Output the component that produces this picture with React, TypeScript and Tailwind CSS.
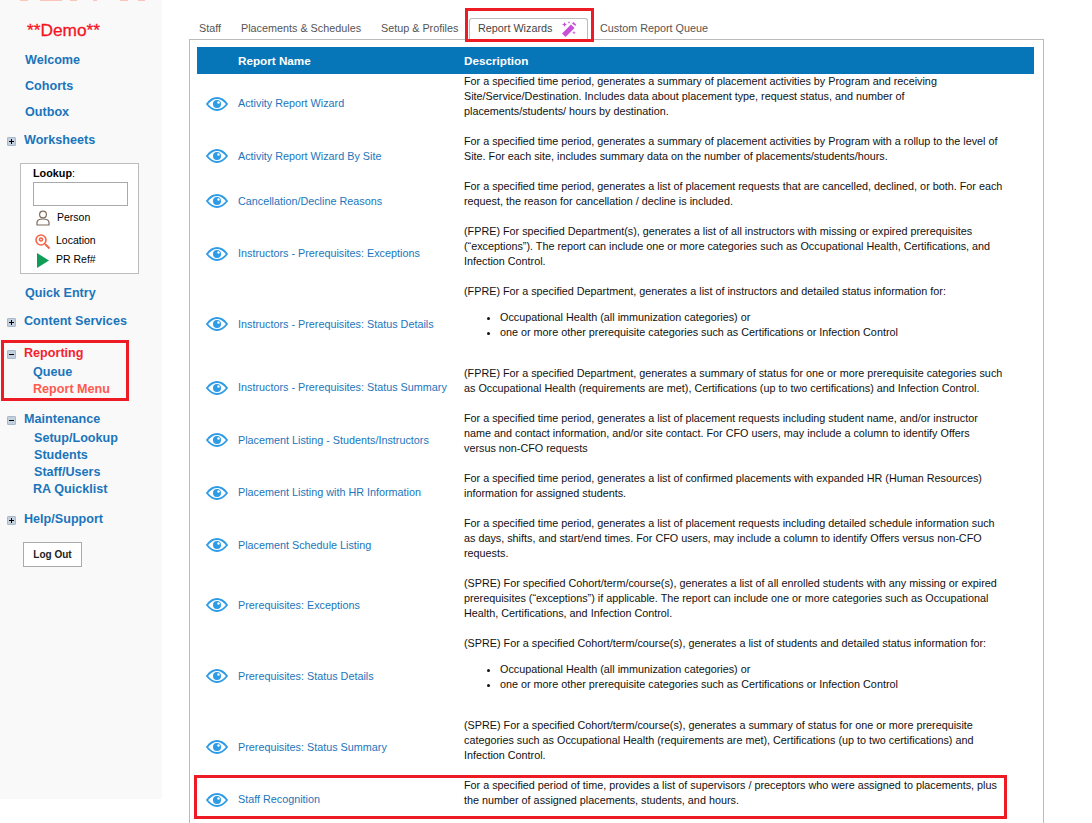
const rows = [
  { name: 'Activity Report Wizard', text: 'For a specified time period, generates a summary of placement activities by Program and receiving Site/Service/Destination. Includes data about placement type, request status, and number of placements/students/ hours by destination.' },
  { name: 'Activity Report Wizard By Site', text: 'For a specified time period, generates a summary of placement activities by Program with a rollup to the level of Site. For each site, includes summary data on the number of placements/students/hours.' },
  { name: 'Cancellation/Decline Reasons', text: 'For a specified time period, generates a list of placement requests that are cancelled, declined, or both. For each request, the reason for cancellation / decline is included.' },
  { name: 'Instructors - Prerequisites: Exceptions', text: '(FPRE) For specified Department(s), generates a list of all instructors with missing or expired prerequisites (“exceptions”). The report can include one or more categories such as Occupational Health, Certifications, and Infection Control.' },
  { name: 'Instructors - Prerequisites: Status Details', text: '(FPRE) For a specified Department, generates a list of instructors and detailed status information for:', listMargin: 'mb-[10.5px]', list: ['Occupational Health (all immunization categories) or', 'one or more other prerequisite categories such as Certifications or Infection Control'] },
  { name: 'Instructors - Prerequisites: Status Summary', text: '(FPRE) For a specified Department, generates a summary of status for one or more prerequisite categories such as Occupational Health (requirements are met), Certifications (up to two certifications) and Infection Control.' },
  { name: 'Placement Listing - Students/Instructors', text: 'For a specified time period, generates a list of placement requests including student name, and/or instructor name and contact information, and/or site contact. For CFO users, may include a column to identify Offers versus non-CFO requests' },
  { name: 'Placement Listing with HR Information', text: 'For a specified time period, generates a list of confirmed placements with expanded HR (Human Resources) information for assigned students.' },
  { name: 'Placement Schedule Listing', text: 'For a specified time period, generates a list of placement requests including detailed schedule information such as days, shifts, and start/end times. For CFO users, may include a column to identify Offers versus non-CFO requests.' },
  { name: 'Prerequisites: Exceptions', text: '(SPRE) For specified Cohort/term/course(s), generates a list of all enrolled students with any missing or expired prerequisites (“exceptions”) if applicable. The report can include one or more categories such as Occupational Health, Certifications, and Infection Control.' },
  { name: 'Prerequisites: Status Details', text: '(SPRE) For a specified Cohort/term/course(s), generates a list of students and detailed status information for:', listMargin: 'mb-[11px]', list: ['Occupational Health (all immunization categories) or', 'one or more other prerequisite categories such as Certifications or Infection Control'] },
  { name: 'Prerequisites: Status Summary', text: '(SPRE) For a specified Cohort/term/course(s), generates a summary of status for one or more prerequisite categories such as Occupational Health (requirements are met), Certifications (up to two certifications) and Infection Control.' },
  { name: 'Staff Recognition', text: 'For a specified period of time, provides a list of supervisors / preceptors who were assigned to placements, plus the number of assigned placements, students, and hours.' },
]

function Eye() {
  return (
    <svg width="22" height="14" viewBox="0 0 22 14" fill="none">
      <path d="M1 7C4 3 7 1 11 1s7 2 10 6c-3 4-6 6-10 6S4 11 1 7z" stroke="#2e9be6" strokeWidth="1.8" />
      <circle cx="11" cy="7" r="4" fill="#2e9be6" />
      <circle cx="12.5" cy="5.500" r="1.200" fill="#fff" />
    </svg>
  )
}

function Box({ minus }: { minus?: boolean }) {
  return (
    <span className="relative flex h-[9px] w-[9px] items-center justify-center rounded-[1px] border border-[#a9b9ca] bg-[#c3d0de]">
      <span className="h-px w-[5px] bg-black" />
      {!minus && <span className="absolute h-[5px] w-px bg-black" />}
    </span>
  )
}

function NavHead({ label, minus, red, className }: { label: string; minus?: boolean; red?: boolean; className?: string }) {
  return (
    <div className={`flex h-[18px] items-center ${className ?? ''}`}>
      <div className="w-[24px] pl-[7px] pt-[3px]"><Box minus={minus} /></div>
      <span className={`text-[12.6px] font-bold leading-[18px] ${red ? 'text-[#f5222d]' : 'text-[#1b75bb]'}`}>{label}</span>
    </div>
  )
}

function Sub({ label, red, indent }: { label: string; red?: boolean; indent?: string }) {
  return <div className={`text-[12.6px] font-bold leading-[17px] ${indent ?? 'pl-[34px]'} ${red ? 'text-[#ff5a4f]' : 'text-[#1b75bb]'}`}>{label}</div>
}

export default function App() {
  return (
    <div className="relative flex h-[823px] w-[1092px] overflow-hidden bg-white text-black" style={{ fontFamily: '"Liberation Sans", Arial, sans-serif' }}>
      <aside className="h-[799px] w-[162px] shrink-0 bg-[#f9f9f9]">
        {/* bottom edge of the cropped logo */}
        <svg width="162" height="3" className="block" fill="#fcc5b8">
          <rect x="20" width="8" height="1" />
          <rect x="40" width="22" height="1" />
          <rect x="70" width="7" height="1" />
          <rect x="93" width="4" height="1" />
          <rect x="120" width="8" height="1" />
          <rect x="138" width="7" height="1" />
        </svg>
        <div className="mt-[17px] pl-[27px] text-[17.3px] leading-[20px] text-[#f5141e] [-webkit-text-stroke:0.3px_#f5141e]">**Demo**</div>
        <div className="mt-[7px] pl-[25px] text-[12.6px] font-bold leading-[26px] text-[#1b75bb]">
          <div>Welcome</div>
          <div>Cohorts</div>
          <div>Outbox</div>
        </div>
        <NavHead label="Worksheets" className="mt-[6px]" />
        <div className="ml-[20px] mt-[14px] h-[111px] w-[119px] border border-[#bdbdbd] bg-white pl-[12px]">
          <div className="text-[10.8px] font-bold leading-[18px]">Lookup<span className="font-normal">:</span></div>
          <div className="h-[24px] w-[95px] border border-[#aaa] bg-white" />
          <div className="mt-[2px] flex h-[20px] items-center gap-[7px] pl-[3px] text-[10.5px]">
            <svg width="14" height="16" viewBox="0 0 14 16" fill="none" stroke="#7d6a5d" strokeWidth="1.200">
              <circle cx="7" cy="4.500" r="3.400" />
              <path d="M1 15v-2.500c0-2 2-3.500 6-3.500s6 1.500 6 3.500V15z" />
            </svg>
            Person
          </div>
          <div className="mt-[3px] flex h-[20px] items-center gap-[6px] pl-[2px] text-[10.5px]">
            <svg width="15" height="15" viewBox="0 0 15 15" fill="none" stroke="#f4664a" strokeWidth="1.600">
              <circle cx="6" cy="6" r="5" />
              <circle cx="6" cy="5.500" r="1.500" />
              <path d="M10 10l4.500 4.500" strokeWidth="2" />
            </svg>
            Location
          </div>
          <div className="flex h-[18px] items-center gap-[7px] pl-[4px] text-[10.5px]">
            <svg width="12" height="15" viewBox="0 0 12 15"><path d="M0 0l12 7.500L0 15z" fill="#0f9d58" /></svg>
            PR Ref#
          </div>
        </div>
        <div className="mt-[10px] pl-[25px] text-[12.6px] font-bold leading-[18px] text-[#1b75bb]">Quick Entry</div>
        <NavHead label="Content Services" className="mt-[10px]" />
        <NavHead label="Reporting" minus red className="mt-[14px]" />
        <div className="mt-[2px]">
          <Sub label="Queue" indent="pl-[33px]" />
          <Sub label="Report Menu" red indent="pl-[33px]" />
        </div>
        <NavHead label="Maintenance" minus className="mt-[12px]" />
        <div className="mt-[2px]">
          <Sub label="Setup/Lookup" />
          <Sub label="Students" />
          <Sub label="Staff/Users" />
          <Sub label="RA Quicklist" indent="pl-[33px]" />
        </div>
        <NavHead label="Help/Support" className="mt-[12px]" />
        <button className="ml-[23px] mt-[14px] h-[25px] w-[59px] border border-[#aaa] bg-white text-[10px] font-bold text-[#222]">Log Out</button>
      </aside>

      <main className="flex-1 pl-[27px] pt-[11px]">
        <div className="flex h-[28px] items-end pl-[10px] text-[10.8px] text-[#555]">
          <span className="mb-[3px] w-[42px]">Staff</span>
          <span className="mb-[3px] w-[140px]">Placements &amp; Schedules</span>
          <span className="mb-[3px] w-[88px] whitespace-nowrap">Setup &amp; Profiles</span>
          <span className="flex h-[21px] w-[119px] items-center gap-[8px] rounded-t-[3px] border border-b-0 border-[#bbb] bg-white pb-[1px] pl-[8px] text-[#444]">
            Report Wizards
            <svg width="17" height="16" viewBox="0 0 16 16" fill="#c94fd8">
              <path d="M1.500 12.500L10.500 3.500l3.500 3.500-9 9z" />
              <path d="M11.500 2.500L13 1l2.500 2.500L15 5z" />
              <path d="M4 1l.7 1.800L6.500 3.500l-1.800.7L4 6l-.7-1.800L1.500 3.500l1.800-.7zM13.500 10l.5 1.300 1.300.5-1.300.5-.5 1.300-.5-1.300-1.300-.5 1.300-.5zM8.500 0l.4 1 1 .4-1 .4-.4 1-.4-1-1-.4 1-.4z" />
            </svg>
          </span>
          <span className="mb-[3px] ml-[12px]">Custom Report Queue</span>
        </div>
        <div className="h-[900px] w-[855px] border border-b-0 border-[#bbb] pl-[7px] pr-[9px] pt-[7px]">
          <div className="flex h-[27px] items-center bg-[#0776b8] text-[11.7px] font-bold text-white">
            <span className="w-[267px] pl-[41px]">Report Name</span>
            <span>Description</span>
          </div>
          {rows.map((r) => (
            <div key={r.name} className="flex items-stretch">
              <div className="flex w-[267px] shrink-0 items-center pb-[1px] text-[10.8px] text-[#1b75bb]">
                <span className="w-[41px] pl-[9px]"><Eye /></span>
                <span className="whitespace-nowrap">{r.name}</span>
              </div>
              <div className="w-[540px] pb-[15px] text-[10.8px] leading-[15px] text-[#111]">
                <p>{r.text}</p>
                {r.list && (
                  <ul className={`${r.listMargin} mt-[11px] list-disc pl-[36px]`}>
                    {r.list.map((item) => <li key={item}>{item}</li>)}
                  </ul>
                )}
              </div>
            </div>
          ))}
        </div>
      </main>

      {/* red annotation boxes drawn over the screenshot */}
      <div className="absolute left-[1px] top-[340px] h-[61px] w-[128px] border-[3px] border-[#ed1c24]" />
      <div className="absolute left-[465px] top-[8px] h-[34px] w-[129px] border-[3px] border-[#ed1c24]" />
      <div className="absolute left-[194px] top-[775px] h-[44px] w-[813px] border-[3px] border-[#ed1c24]" />
    </div>
  )
}
